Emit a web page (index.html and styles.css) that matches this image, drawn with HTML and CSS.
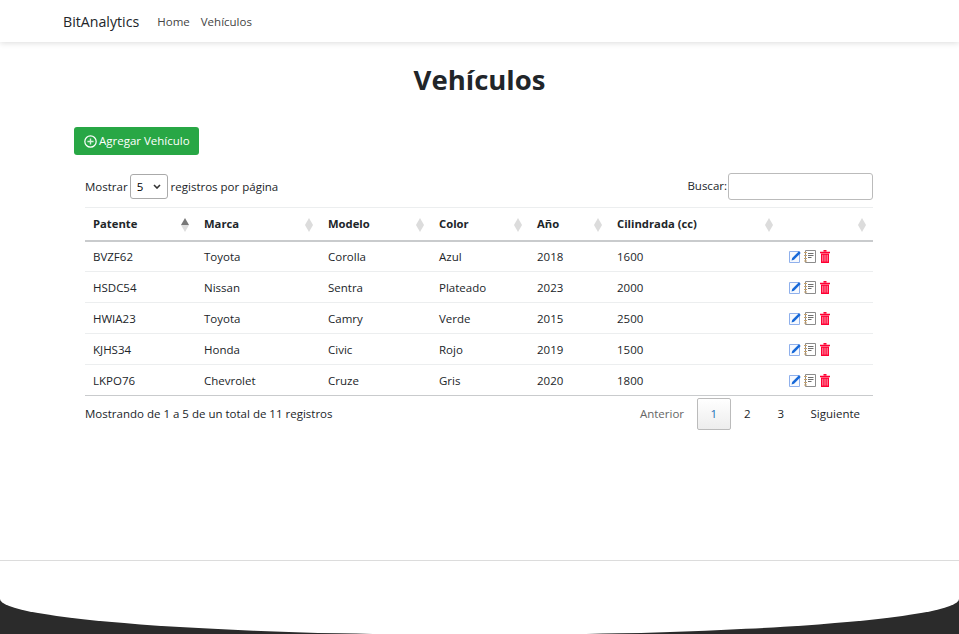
FILE: index.html
```html
<!DOCTYPE html>
<html lang="es">

<head>
  <meta charset="UTF-8">
  <meta name="viewport" content="width=device-width, initial-scale=1.0">
  <title>Vehículos - BitAnalytics</title>
  <link rel="stylesheet" href="styles.css">
</head>

<body>
  <nav class="navbar">
    <a class="brand" href="#">BitAnalytics</a>
    <a class="nav-link" href="#">Home</a>
    <a class="nav-link" href="#">Vehículos</a>
  </nav>

  <main class="content">
    <h1 class="title">Vehículos</h1>

    <a class="btn-add" href="#">
      <svg class="icon-plus" viewBox="0 0 16 16" width="13" height="13">
        <circle cx="8" cy="8" r="7" fill="none" stroke="#fff" stroke-width="1.5" />
        <path d="M8 4.2v7.6M4.2 8h7.6" stroke="#d6f2dc" stroke-width="1.7" fill="none" />
      </svg>
      Agregar Vehículo
    </a>

    <section class="table-wrap">
      <div class="table-top">
        <label class="length">Mostrar
          <select class="length-select">
            <option>5</option>
            <option>10</option>
          </select>
          registros por página</label>
        <label class="search">Buscar:<input class="search-input" type="search"></label>
      </div>

      <table class="data-table">
        <colgroup>
          <col class="c1">
          <col class="c2">
          <col class="c3">
          <col class="c4">
          <col class="c5">
          <col class="c6">
          <col>
        </colgroup>
        <thead>
          <tr>
            <th class="sort sort-asc">Patente</th>
            <th class="sort">Marca</th>
            <th class="sort">Modelo</th>
            <th class="sort">Color</th>
            <th class="sort">Año</th>
            <th class="sort">Cilindrada (cc)</th>
            <th class="sort"></th>
          </tr>
        </thead>
        <tbody id="rows"></tbody>
      </table>

      <div class="table-bottom">
        <div class="info">Mostrando de 1 a 5 de un total de 11 registros</div>
        <div class="pager">
          <a class="page muted" href="#">Anterior</a>
          <a class="page page-num current" href="#">1</a>
          <a class="page page-num" href="#">2</a>
          <a class="page page-num" href="#">3</a>
          <a class="page" href="#">Siguiente</a>
        </div>
      </div>
    </section>
  </main>

  <footer class="footer">
    <svg class="footer-curve" viewBox="0 0 959 73" width="959" height="73">
      <path d="M0 0H959V38A479.5 35.9 0 0 1 0 38Z" fill="#fff" />
    </svg>
  </footer>

  <template id="actions">
    <span class="actions">
      <svg viewBox="0 0 12 13" width="12" height="13">
        <path d="M.5 1.5h10v11H.5z" fill="#f6f9fe" stroke="#8fb0ec" />
        <path d="M2.6 10.4 3.2 8 9.9 1.3 11.7 3.1 5 9.8z" fill="#1668d8" />
      </svg>
      <svg viewBox="0 0 12 13" width="12" height="13">
        <path d="M1.5.5h10v12h-10z" fill="#fff" stroke="#8c8c8c" />
        <path d="M0 2.5h3M0 5.5h3M0 8.5h3M0 11h3" stroke="#c9a26a" fill="none" />
        <path d="M4 3.5h5.5M4 5.5h5.5M4 7.5h3.5" stroke="#6f6f6f" fill="none" />
      </svg>
      <svg viewBox="-.5 0 12 13" width="12" height="13">
        <path d="M4 .8h3M.5 2.5h10" stroke="#ff0033" stroke-width="1.5" fill="none" />
        <path d="M1.5 3.5h8v9.5h-8z" fill="#ff0033" />
        <path d="M3.3 4.8v6.8M5.5 4.8v6.8M7.7 4.8v6.8" stroke="#ff9db3" stroke-width="1" />
      </svg>
    </span>
  </template>

  <script>
    var vehiculos = [
      ["BVZF62", "Toyota", "Corolla", "Azul", "2018", "1600"],
      ["HSDC54", "Nissan", "Sentra", "Plateado", "2023", "2000"],
      ["HWIA23", "Toyota", "Camry", "Verde", "2015", "2500"],
      ["KJHS34", "Honda", "Civic", "Rojo", "2019", "1500"],
      ["LKPO76", "Chevrolet", "Cruze", "Gris", "2020", "1800"]
    ];
    var rows = document.getElementById("rows");
    var actions = document.getElementById("actions");
    vehiculos.forEach(function (v) {
      var tr = document.createElement("tr");
      v.forEach(function (val) {
        var td = document.createElement("td");
        td.textContent = val;
        tr.appendChild(td);
      });
      var last = document.createElement("td");
      last.className = "cell-actions";
      last.appendChild(actions.content.cloneNode(true));
      tr.appendChild(last);
      rows.appendChild(tr);
    });
  </script>
</body>

</html>
```

FILE: styles.css
```css
* {
  box-sizing: border-box;
}

body {
  margin: 0;
  height: 634px;
  display: flex;
  flex-direction: column;
  overflow: hidden;
  font: 11.5px/18px "Open Sans", sans-serif;
  color: #212529;
  background: #fff;
}

a {
  text-decoration: none;
  color: inherit;
}

.navbar {
  flex: none;
  height: 42px;
  padding: 1px 63px 0;
  display: flex;
  align-items: center;
  background: #fff;
  box-shadow: 0 1px 6px rgba(0, 0, 0, .14);
}

.brand {
  font-size: 14.2px;
  margin-right: 18px;
}

.nav-link {
  margin-right: 11px;
  color: #444;
}

.content {
  flex: 1;
  padding: 0 74px;
}

.title {
  margin: 20px 0 29px;
  font-size: 27.5px;
  line-height: 36px;
  font-weight: 700;
  text-align: center;
}

.btn-add {
  display: inline-flex;
  align-items: center;
  gap: 2px;
  height: 28px;
  padding: 0 9px 0 10px;
  background: #28a745;
  color: #fff;
  border-radius: 3px;
}

.table-wrap {
  margin: 18px 12px 0 11px;
}

.table-top {
  display: flex;
  justify-content: space-between;
  align-items: center;
  height: 27px;
  margin-bottom: 7px;
}

.length-select {
  appearance: none;
  width: 38px;
  height: 25px;
  margin: 0 0 0 -1px;
  padding: 0 0 0 6px;
  font: inherit;
  background: #fff url("data:image/svg+xml,%3Csvg xmlns='http://www.w3.org/2000/svg' width='8' height='5'%3E%3Cpath d='M1 1l3 3 3-3' fill='none' stroke='%23333' stroke-width='1.6'/%3E%3C/svg%3E") no-repeat right 6px center;
  border: 1px solid #aaa;
  border-radius: 3px;
}

.search-input {
  width: 145px;
  height: 27px;
  margin-left: 1px;
  vertical-align: middle;
  border: 1px solid #bbb;
  border-radius: 3px;
}

.data-table {
  width: 100%;
  table-layout: fixed;
  border-collapse: collapse;
}

.c1 {
  width: 111px;
}

.c2 {
  width: 124px;
}

.c3 {
  width: 111px;
}

.c4 {
  width: 98px;
}

.c5 {
  width: 80px;
}

.c6 {
  width: 171px;
}

.data-table th {
  height: 33px;
  padding: 1px 8px 0;
  font-size: 11.25px;
  text-align: left;
  font-weight: 700;
  border-top: 1px solid #eceeef;
  border-bottom: 2px solid #c9cbcd;
}

.data-table td {
  height: 31px;
  padding: 2px 8px 0;
  border-bottom: 1px solid #eceeef;
}

.data-table tr:last-child td {
  border-bottom: 1px solid #c9cbcd;
}

.sort {
  position: relative;
}

.sort::before,
.sort::after {
  content: "";
  position: absolute;
  right: 7px;
  border-left: 4px solid transparent;
  border-right: 4px solid transparent;
}

.sort::before {
  top: 10px;
  border-bottom: 7px solid #dcdcdc;
}

.sort::after {
  top: 17px;
  border-top: 7px solid #dcdcdc;
}

.sort-asc::before {
  border-bottom-color: #777;
}

.actions {
  display: flex;
  align-items: center;
  gap: 3px;
}

.data-table .cell-actions {
  padding: 0 8px 0 9px;
}

.table-bottom {
  display: flex;
  justify-content: space-between;
  padding-top: 2px;
}

.info {
  padding-top: 7px;
}

.pager {
  display: flex;
}

.page {
  height: 32px;
  padding: 0 12px;
  display: flex;
  align-items: center;
  border: 1px solid transparent;
  border-radius: 2px;
}

.page-num {
  width: 33.5px;
  padding: 0;
  justify-content: center;
}

.page.muted {
  color: #666;
}

.page.current {
  color: #1f6fb5;
  background: linear-gradient(#fff, #ededed);
  border-color: #bbb;
}

.footer {
  flex: none;
  height: 74px;
  overflow: hidden;
  background: #2b2b2b;
  border-top: 1px solid #dcdcdc;
}

.footer-curve {
  display: block;
}
```
